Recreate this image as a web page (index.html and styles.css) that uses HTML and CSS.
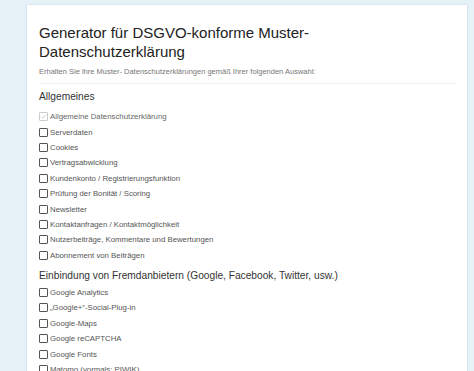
FILE: index.html
```html
<!DOCTYPE html>
<html lang="de">
<head>
    <meta charset="UTF-8">
    <meta name="viewport" content="width=device-width, initial-scale=1.0">
    <link rel="stylesheet" href="styles.css">
    <title>DSGVO Generator</title>
</head>
<body>
    <div class="card">
        <h1 class="title">Generator für DSGVO-konforme Muster-<br>Datenschutzerklärung</h1>
        <p class="lead">Erhalten Sie ihre Muster- Datenschutzerklärungen gemäß Ihrer folgenden Auswahl:</p>
        <hr class="divider">

        <h2 class="section">Allgemeines</h2>
        <ul class="options">
            <li class="option checked"><span class="box"><svg viewBox="0 0 10 10"><path d="M1.8 5.2 L4 7.4 L8.4 2.2" /></svg></span>Allgemeine Datenschutzerklärung</li>
            <li class="option"><span class="box"></span>Serverdaten</li>
            <li class="option"><span class="box"></span>Cookies</li>
            <li class="option"><span class="box"></span>Vertragsabwicklung</li>
            <li class="option"><span class="box"></span>Kundenkonto / Registrierungsfunktion</li>
            <li class="option"><span class="box"></span>Prüfung der Bonität / Scoring</li>
            <li class="option"><span class="box"></span>Newsletter</li>
            <li class="option"><span class="box"></span>Kontaktanfragen / Kontaktmöglichkeit</li>
            <li class="option"><span class="box"></span>Nutzerbeiträge, Kommentare und Bewertungen</li>
            <li class="option"><span class="box"></span>Abonnement von Beiträgen</li>
        </ul>

        <h2 class="section">Einbindung von Fremdanbietern (Google, Facebook, Twitter, usw.)</h2>
        <ul class="options">
            <li class="option"><span class="box"></span>Google Analytics</li>
            <li class="option"><span class="box"></span>„Google+“-Social-Plug-in</li>
            <li class="option"><span class="box"></span>Google-Maps</li>
            <li class="option"><span class="box"></span>Google reCAPTCHA</li>
            <li class="option"><span class="box"></span>Google Fonts</li>
            <li class="option"><span class="box"></span>Matomo (vormals: PIWIK)</li>
        </ul>
    </div>
</body>
</html>
```

FILE: styles.css
```css
* {
    box-sizing: border-box;
}

body {
    margin: 0;
    padding: 5px 7px 0 27px;
    background-color: #e6f2f8;
    font-family: "Liberation Sans", Arial, sans-serif;
    overflow: hidden;
}

.card {
    background-color: #fff;
    padding: 18px 12px 20px 12px;
    box-shadow: 0 0 2px rgba(150, 180, 200, 0.5);
}

.title {
    margin: 0;
    font-size: 15px;
    font-weight: normal;
    line-height: 19px;
    color: #222;
}

.lead {
    margin: 5px 0 0 0;
    font-size: 7.5px;
    line-height: 12px;
    color: #777;
}

.divider {
    margin: 5px 0 0 0;
    border: 0;
    border-top: 1px solid #eee;
}

.section {
    margin: 6px 0 5px 0;
    font-size: 10.2px;
    font-weight: normal;
    line-height: 14px;
    color: #333;
}

.options + .section {
    margin-bottom: 2px;
}

.options {
    list-style: none;
    margin: 0;
    padding: 0;
}

.option {
    display: flex;
    align-items: center;
    height: 15.4px;
    font-size: 7.8px;
    color: #555;
}

.box {
    width: 9px;
    height: 9px;
    border: 1px solid #555;
    border-radius: 1px;
    margin-right: 2px;
    flex-shrink: 0;
}

.box svg {
    display: block;
    width: 7px;
    height: 7px;
    fill: none;
    stroke: #bbb;
    stroke-width: 1px;
}

.checked {
    color: #666;
}

.checked .box {
    border-color: #ccc;
}
```
